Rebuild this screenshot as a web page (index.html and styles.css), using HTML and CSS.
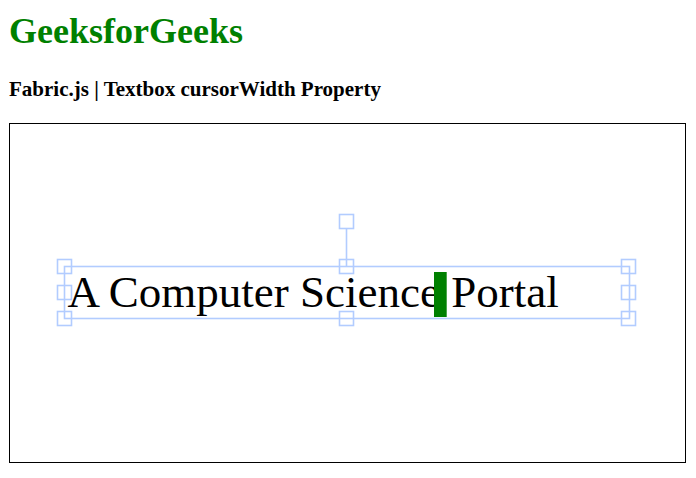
FILE: index.html
```html
<!DOCTYPE html>
<html>
<head>
<meta charset="utf-8">
<link rel="stylesheet" href="styles.css">
</head>
<body>
<h1 class="brand">GeeksforGeeks</h1>
<h3 class="subtitle">Fabric.js | Textbox cursorWidth Property</h3>
<div class="canvas">
  <svg class="scene" width="675" height="338" viewBox="0 0 675 338" xmlns="http://www.w3.org/2000/svg">
    <text x="57.5" y="182.7" class="tb-text">A Computer Science Portal</text>
    <rect x="424" y="148" width="12.7" height="45" fill="#008000"/>
    <g fill="none" stroke="rgb(178,204,255)" stroke-width="1.6">
      <rect x="54.5" y="142.5" width="565" height="52"/>
      <line x1="336.5" y1="104.5" x2="336.5" y2="142.5"/>
      <rect x="329.5" y="90.5" width="14" height="14"/>
      <rect x="47.5" y="135.5" width="14" height="14"/>
      <rect x="329.5" y="135.5" width="14" height="14"/>
      <rect x="611.5" y="135.5" width="14" height="14"/>
      <rect x="47.5" y="161.5" width="14" height="14"/>
      <rect x="611.5" y="161.5" width="14" height="14"/>
      <rect x="47.5" y="187.5" width="14" height="14"/>
      <rect x="329.5" y="187.5" width="14" height="14"/>
      <rect x="611.5" y="187.5" width="14" height="14"/>
    </g>
  </svg>
</div>
</body>
</html>
```
FILE: styles.css
```css
html, body {
  margin: 0;
  padding: 0;
  background: #fff;
}
body {
  padding: 0 9px;
  font-family: "Liberation Serif", "Times New Roman", serif;
  color: #000;
}
.brand {
  margin: 11px 0 0;
  font-size: 36px;
  line-height: 41px;
  font-weight: bold;
  color: #008000;
}
.subtitle {
  margin: 25px 0 0;
  font-size: 21px;
  line-height: 24px;
  font-weight: bold;
}
.canvas {
  margin-top: 22px;
  width: 675px;
  height: 338px;
  border: 1px solid #000;
}
.scene {
  display: block;
}
.tb-text {
  font-family: "Liberation Serif", "Times New Roman", serif;
  font-size: 45px;
  fill: #000;
}
```
